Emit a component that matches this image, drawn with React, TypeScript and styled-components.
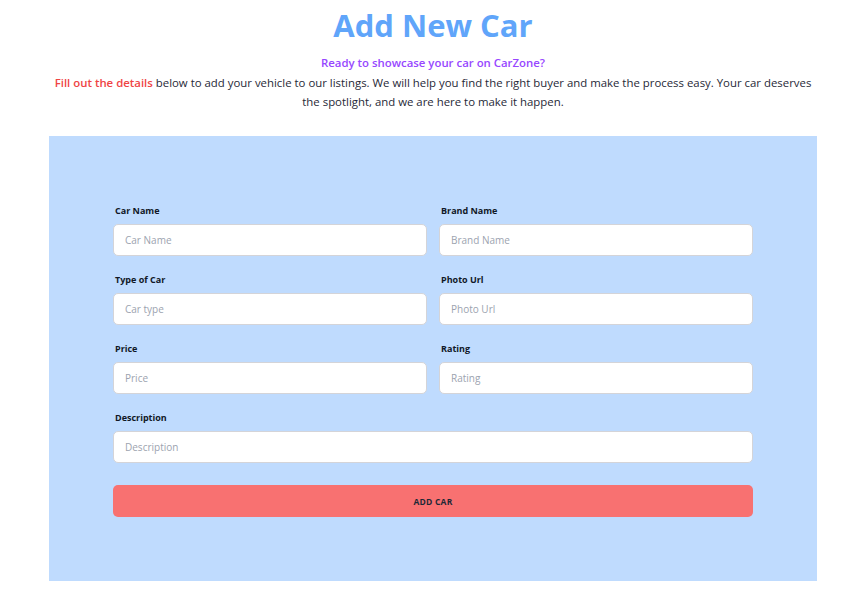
import React from "react";
import styled, { createGlobalStyle } from "styled-components";

const Global = createGlobalStyle`
  html, body { margin: 0; padding: 0; background: #ffffff; }
  body { font-family: "Open Sans", "Noto Sans", sans-serif; color: #1f2937; }
  * { box-sizing: border-box; }
`;

const Page = styled.div`
  width: 866px;
  display: flex;
  flex-direction: column;
  align-items: center;
`;

const Header = styled.header`
  width: 768px;
  text-align: center;
  padding-top: 4px;
`;

const Title = styled.h1`
  margin: 0;
  font-size: 31px;
  line-height: 43px;
  font-weight: 700;
  color: #60a5fa;
`;

const Subtitle = styled.p`
  margin: 7px 0 0;
  font-size: 11.4px;
  line-height: 18px;
  font-weight: 600;
  color: #9747ff;
`;

const Intro = styled.p`
  margin: 1px 0 0;
  padding: 0 4px;
  font-size: 11.4px;
  line-height: 19px;
  color: #1f2937;
`;

const Highlight = styled.span`
  color: #ef4444;
  font-weight: 600;
`;

const Panel = styled.section`
  margin-top: 25px;
  width: 768px;
  background: #bfdbfe;
  padding: 66px 64px 64px;
`;

const Form = styled.form`
  display: grid;
  grid-template-columns: 1fr 1fr;
  column-gap: 12px;
  row-gap: 15px;
`;

const Field = styled.div<{ $full?: boolean }>`
  display: flex;
  flex-direction: column;
  gap: 4px;
  grid-column: ${(p) => (p.$full ? "1 / -1" : "auto")};
`;

const Label = styled.label`
  font-size: 9px;
  line-height: 18px;
  font-weight: 700;
  color: #111827;
  padding-left: 2px;
`;

const Input = styled.input`
  height: 32px;
  width: 100%;
  border: 1px solid #d4d4d8;
  border-radius: 5px;
  background: #ffffff;
  padding: 0 11px;
  font-family: inherit;
  font-size: 10px;
  color: #1f2937;
  outline: none;
  &::placeholder { color: #9ca3af; }
`;

const Button = styled.button`
  grid-column: 1 / -1;
  margin-top: 7px;
  height: 32px;
  border: none;
  border-radius: 5px;
  background: #f87171;
  font-family: inherit;
  font-size: 8.5px;
  font-weight: 700;
  color: #1f2937;
  letter-spacing: 0.2px;
  cursor: pointer;
`;

const fields = [
  { label: "Car Name", placeholder: "Car Name" },
  { label: "Brand Name", placeholder: "Brand Name" },
  { label: "Type of Car", placeholder: "Car type" },
  { label: "Photo Url", placeholder: "Photo Url" },
  { label: "Price", placeholder: "Price" },
  { label: "Rating", placeholder: "Rating" },
];

export default function App() {
  return (
    <Page>
      <Global />
      <Header>
        <Title>Add New Car</Title>
        <Subtitle>Ready to showcase your car on CarZone?</Subtitle>
        <Intro>
          <Highlight>Fill out the details</Highlight> below to add your vehicle to our listings. We will help you
          find the right buyer and make the process easy. Your car deserves the spotlight, and we are here to
          make it happen.
        </Intro>
      </Header>
      <Panel>
        <Form onSubmit={(e) => e.preventDefault()}>
          {fields.map((f) => (
            <Field key={f.label}>
              <Label>{f.label}</Label>
              <Input placeholder={f.placeholder} />
            </Field>
          ))}
          <Field $full>
            <Label>Description</Label>
            <Input placeholder="Description" />
          </Field>
          <Button type="submit">ADD CAR</Button>
        </Form>
      </Panel>
    </Page>
  );
}
